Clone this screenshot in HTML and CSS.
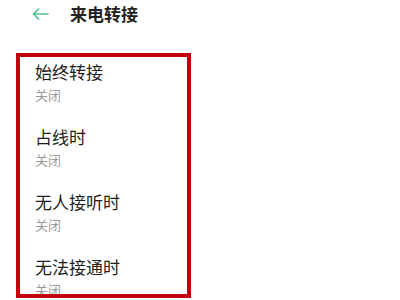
FILE: index.html
```html
<!DOCTYPE html>
<html lang="zh-CN">
<head>
    <meta charset="UTF-8">
    <meta name="viewport" content="width=device-width, initial-scale=1.0">
    <title>来电转接</title>
    <link rel="stylesheet" href="styles.css">
</head>
<body>
    <!-- Header -->
    <div class="header">
        <svg class="back" width="17" height="12" viewBox="0 0 17 12">
            <path d="M16 6H1.5M6.5 1L1.5 6L6.5 11" fill="none" stroke="#52c38f" stroke-width="1.7" stroke-linecap="round" stroke-linejoin="round"/>
        </svg>
        <h1>来电转接</h1>
    </div>

    <!-- Forwarding options -->
    <div class="list">
        <div class="item">
            <div class="item-title">始终转接</div>
            <div class="item-sub">关闭</div>
        </div>
        <div class="item">
            <div class="item-title">占线时</div>
            <div class="item-sub">关闭</div>
        </div>
        <div class="item">
            <div class="item-title">无人接听时</div>
            <div class="item-sub">关闭</div>
        </div>
        <div class="item">
            <div class="item-title">无法接通时</div>
            <div class="item-sub">关闭</div>
        </div>
    </div>
</body>
</html>
```

FILE: styles.css
```css
body {
    margin: 0;
    background: #fff;
    font-family: "Noto Sans CJK SC", "Noto Sans", sans-serif;
    width: 400px;
    height: 300px;
    overflow: hidden;
}

.header {
    display: flex;
    align-items: center;
    height: 27px;
    padding-left: 32px;
}

.back {
    display: block;
}

.header h1 {
    margin: 0 0 0 21px;
    font-size: 17px;
    font-weight: 600;
    color: #222;
    line-height: 22px;
}

.list {
    margin: 26px 0 0 16px;
    width: 152px;
    height: 233px;
    border: 4px solid #c3000b;
    padding: 4px 0 0 15px;
    overflow: hidden;
    display: flex;
    flex-direction: column;
    gap: 22px;
}

.item {
    display: flex;
    flex-direction: column;
    gap: 3px;
}

.item-title {
    font-size: 17px;
    line-height: 22px;
    color: #1e1e1e;
}

.item-sub {
    font-size: 13px;
    line-height: 18px;
    color: #9a9a9a;
}
```
